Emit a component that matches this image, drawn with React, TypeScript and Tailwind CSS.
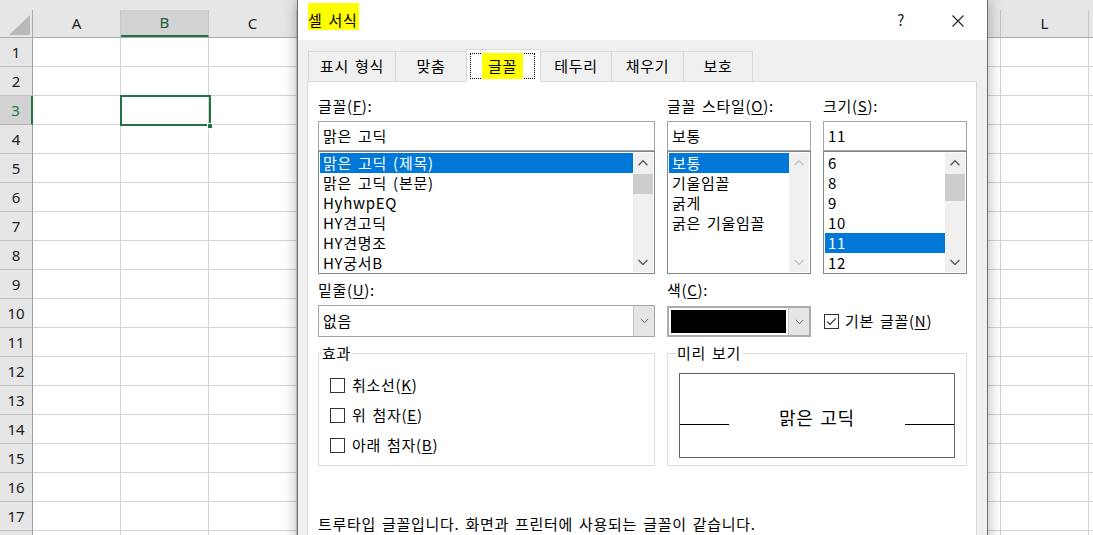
import React from "react";

const COLS = ["A", "B", "C", "D", "E", "F", "G", "H", "I", "J", "K", "L", ""];
const ROWS = Array.from({ length: 18 }, (_, i) => i + 1);

function Chev({ up, color }: { up?: boolean; color: string }) {
  return (
    <svg width="20" height="20" viewBox="0 0 20 20">
      <path
        d={up ? "M5.5 12.2 L10 7.7 L14.5 12.2" : "M5.5 8 L10 12.5 L14.5 8"}
        fill="none"
        stroke={color}
        strokeWidth="1.4"
      />
    </svg>
  );
}

function SmallChev() {
  return (
    <svg width="9" height="6" viewBox="0 0 9 6">
      <path d="M0.8 1 L4.5 4.7 L8.2 1" fill="none" stroke="#606060" strokeWidth="1" />
    </svg>
  );
}

function ScrollBar({ thumb, disabled }: { thumb?: string; disabled?: boolean }) {
  const c = disabled ? "#c5c5c5" : "#5a5a5a";
  return (
    <div className="w-[20px] shrink-0 bg-[#f0f0f0] flex flex-col">
      <div className="h-[20px] flex items-center justify-center">
        <Chev up color={c} />
      </div>
      {thumb ? <div className={thumb} /> : null}
      <div className="mt-auto h-[20px] flex items-center justify-center">
        <Chev color={c} />
      </div>
    </div>
  );
}

function ListBox({
  items,
  selected,
  thumb,
  disabled,
}: {
  items: string[];
  selected: number;
  thumb?: string;
  disabled?: boolean;
}) {
  return (
    <div className="h-[123px] border border-[#82878f] bg-white flex p-px">
      <div className="flex-1 flex flex-col overflow-hidden">
        {items.map((it, i) => (
          <div
            key={i}
            className={
              i === selected
                ? "h-[20px] shrink-0 leading-[20px] pl-[3px] whitespace-nowrap bg-[#0078d7] text-white"
                : "h-[20px] shrink-0 leading-[20px] pl-[3px] whitespace-nowrap text-black"
            }
          >
            {it}
          </div>
        ))}
      </div>
      <ScrollBar thumb={thumb} disabled={disabled} />
    </div>
  );
}

function Label({ text, key1, rest }: { text: string; key1: string; rest: string }) {
  return (
    <div className="h-[20px] leading-[20px] whitespace-nowrap">
      {text}(<span className="underline underline-offset-2">{key1}</span>){rest}
    </div>
  );
}

function CheckBox({ checked }: { checked?: boolean }) {
  return (
    <div className="w-[15px] h-[15px] shrink-0 border border-[#333333] bg-white flex items-center justify-center">
      {checked ? (
        <svg width="13" height="13" viewBox="0 0 13 13">
          <path d="M2.2 6.6 L5 9.4 L10.8 3.4" fill="none" stroke="#333333" strokeWidth="1.3" />
        </svg>
      ) : null}
    </div>
  );
}

function Tab({ label, cls }: { label: string; cls: string }) {
  return (
    <div className={cls}>
      <span className="whitespace-nowrap">{label}</span>
    </div>
  );
}

export default function App() {
  return (
    <div className="relative w-[1093px] h-[535px] overflow-hidden bg-white font-['Noto_Sans',sans-serif]">
      {/* Spreadsheet */}
      <div className="h-[10px] bg-[#e6e6e6]" />
      <div className="flex h-[28px] bg-[#e6e6e6] border-b border-[#ababab]">
        <div className="w-[33px] shrink-0 border-r border-[#ababab]">
          <svg width="32" height="27" viewBox="0 0 32 27">
            <polygon points="30,5 30,25 9,25" fill="#b9b9b9" />
          </svg>
        </div>
        {COLS.map((c, i) => (
          <div
            key={i}
            className={
              c === "B"
                ? "w-[88px] shrink-0 flex items-center justify-center border-r border-[#c6c6c6] bg-[#d2d2d2] border-b-2 border-b-[#217346] text-[15px] text-[#1b5e37]"
                : "w-[88px] shrink-0 flex items-center justify-center border-r border-[#c6c6c6] text-[15px] text-[#222222]"
            }
          >
            {c}
          </div>
        ))}
      </div>
      {ROWS.map((r) => (
        <div key={r} className="flex h-[29px]">
          <div
            className={
              r === 3
                ? "w-[33px] shrink-0 flex items-center justify-center bg-[#d2d2d2] border-r-2 border-[#217346] border-b border-b-[#b4b4b4] text-[15px] text-[#217346]"
                : "w-[33px] shrink-0 flex items-center justify-center bg-[#e6e6e6] border-r border-[#9e9e9e] border-b border-b-[#c0c0c0] text-[15px] text-[#222222]"
            }
          >
            {r <= 17 ? r : ""}
          </div>
          {COLS.map((c, i) => (
            <div key={i} className="w-[88px] shrink-0 border-r border-b border-[#d4d4d4]" />
          ))}
        </div>
      ))}
      {/* Active cell B3 */}
      <div className="absolute left-[120px] top-[95px] w-[91px] h-[31px] border-2 border-[#217346]" />
      <div className="absolute left-[207px] top-[123px] w-[6px] h-[6px] bg-[#217346] border border-white" />

      {/* Dialog */}
      <div className="absolute left-[297px] top-[-1px] w-[691px] h-[580px] border border-[#6f6f6f] bg-[#f0f0f0] shadow-[0_0_14px_rgba(0,0,0,0.3)] font-['Noto_Sans_CJK_KR','Noto_Sans',sans-serif] text-[15px] text-black tracking-[0.7px] [word-spacing:2px]">
        {/* Title bar */}
        <div className="h-[40px] bg-white flex items-start">
          <div className="ml-[10px] flex-1 mt-[3px]">
            <span className="inline-block bg-[#ffff00] h-[27px] pt-[7px] leading-[20px] pr-[1px]">셀 서식</span>
          </div>
          <span className="mt-[10px] leading-[20px] text-[15px] text-[#222222]">?</span>
          <div className="mt-[15px] ml-[47px] mr-[23px] flex items-center">
            <svg width="12" height="12" viewBox="0 0 12 12">
              <path d="M0.5 0.5 L11.5 11.5 M11.5 0.5 L0.5 11.5" stroke="#222222" strokeWidth="1.1" />
            </svg>
          </div>
        </div>

        {/* Tabs */}
        <div className="mt-[9px] h-[32px] pl-[10px] flex items-end">
          <Tab label="표시 형식" cls="w-[87px] h-[30px] flex items-center justify-center border-t border-l border-[#d9d9d9]" />
          <Tab label="맞춤" cls="w-[71px] h-[30px] flex items-center justify-center border-t border-l border-[#d9d9d9]" />
          <div className="relative z-10 w-[75px] h-[33px] mb-[-1px] bg-white border-t border-x border-[#d9d9d9] pt-[3px] pl-[3px]">
            <div className="w-[65px] h-[26px] border border-dotted border-black flex items-center justify-center">
              <span className="bg-[#ffff00] h-[26px] px-[6px] leading-[26px] whitespace-nowrap">글꼴</span>
            </div>
          </div>
          <Tab label="테두리" cls="w-[70px] h-[30px] flex items-center justify-center border-t border-[#d9d9d9]" />
          <Tab label="채우기" cls="w-[72px] h-[30px] flex items-center justify-center border-t border-l border-[#d9d9d9]" />
          <Tab label="보호" cls="w-[70px] h-[30px] flex items-center justify-center border-t border-x border-[#d9d9d9]" />
        </div>

        {/* Panel */}
        <div className="ml-[9px] w-[670px] h-[480px] border border-[#d9d9d9] bg-white pl-[10px] pt-[14px]">
          <div className="flex items-start gap-[12px]">
            {/* Font column */}
            <div className="w-[337px] flex flex-col">
              <Label text="글꼴" key1="F" rest=":" />
              <div className="mt-[5px] h-[30px] border border-[#a6a6a6] pl-[4px] leading-[28px]">맑은 고딕</div>
              <ListBox
                items={["맑은 고딕 (제목)", "맑은 고딕 (본문)", "HyhwpEQ", "HY견고딕", "HY견명조", "HY궁서B"]}
                selected={0}
                thumb="mt-[1px] h-[20px] bg-[#cdcdcd]"
              />
              <div className="mt-[6px]">
                <Label text="밑줄" key1="U" rest=":" />
              </div>
              <div className="mt-[5px] h-[32px] border border-[#a6a6a6] bg-white flex">
                <div className="flex-1 pl-[4px] leading-[30px]">없음</div>
                <div className="w-[21px] bg-[#e5e5e5] border-l border-[#c4c4c4] flex items-center justify-center">
                  <SmallChev />
                </div>
              </div>
            </div>
            {/* Style column */}
            <div className="w-[144px] flex flex-col">
              <Label text="글꼴 스타일" key1="O" rest=":" />
              <div className="mt-[5px] h-[30px] border border-[#a6a6a6] pl-[4px] leading-[28px]">보통</div>
              <ListBox items={["보통", "기울임꼴", "굵게", "굵은 기울임꼴"]} selected={0} disabled />
              <div className="mt-[6px]">
                <Label text="색" key1="C" rest=":" />
              </div>
              <div className="mt-[6px] h-[31px] border-2 border-[#ababab] bg-white flex">
                <div className="flex-1 p-[2px]">
                  <div className="w-[115px] h-[23px] bg-black" />
                </div>
                <div className="w-[21px] bg-[#e5e5e5] border-l border-[#c4c4c4] flex items-center justify-center">
                  <SmallChev />
                </div>
              </div>
            </div>
            {/* Size column */}
            <div className="w-[144px] flex flex-col">
              <Label text="크기" key1="S" rest=":" />
              <div className="mt-[5px] h-[30px] border border-[#a6a6a6] pl-[4px] leading-[28px]">11</div>
              <ListBox
                items={["6", "8", "9", "10", "11", "12"]}
                selected={4}
                thumb="mt-[1px] h-[27px] bg-[#cdcdcd]"
              />
              <div className="mt-[6px] h-[20px]" />
              <div className="mt-[5px] h-[32px] flex items-center pl-[1px] gap-[6px]">
                <CheckBox checked />
                <span className="leading-[20px] whitespace-nowrap">
                  기본 글꼴(<span className="underline underline-offset-2">N</span>)
                </span>
              </div>
            </div>
          </div>

          {/* Groups */}
          <div className="mt-[16px] flex items-start gap-[12px]">
            <div className="relative w-[337px] h-[113px] border border-[#dcdcdc] pl-[11px] pt-[16px]">
              <span className="absolute left-[2px] top-[-11px] bg-white px-[1px] leading-[20px]">효과</span>
              {[
                ["취소선", "K"],
                ["위 첨자", "E"],
                ["아래 첨자", "B"],
              ].map(([t, k]) => (
                <div key={t} className="h-[30px] flex items-center gap-[7px]">
                  <CheckBox />
                  <span className="leading-[20px] whitespace-nowrap">
                    {t}(<span className="underline underline-offset-2">{k}</span>)
                  </span>
                </div>
              ))}
            </div>
            <div className="relative w-[300px] h-[113px] border border-[#dcdcdc] pl-[11px] pt-[19px]">
              <span className="absolute left-[8px] top-[-11px] bg-white px-[1px] leading-[20px]">미리 보기</span>
              <div className="w-[276px] h-[85px] border border-[#646464] flex items-start">
                <div className="w-[49px] h-px bg-black mt-[50px]" />
                <div className="flex-1 text-center text-[18px] leading-[24px] mt-[31px]">맑은 고딕</div>
                <div className="w-[49px] h-px bg-black mt-[50px]" />
              </div>
            </div>
          </div>

          <div className="mt-[48px] leading-[20px] whitespace-nowrap">
            트루타입 글꼴입니다. 화면과 프린터에 사용되는 글꼴이 같습니다.
          </div>
        </div>
      </div>
    </div>
  );
}
